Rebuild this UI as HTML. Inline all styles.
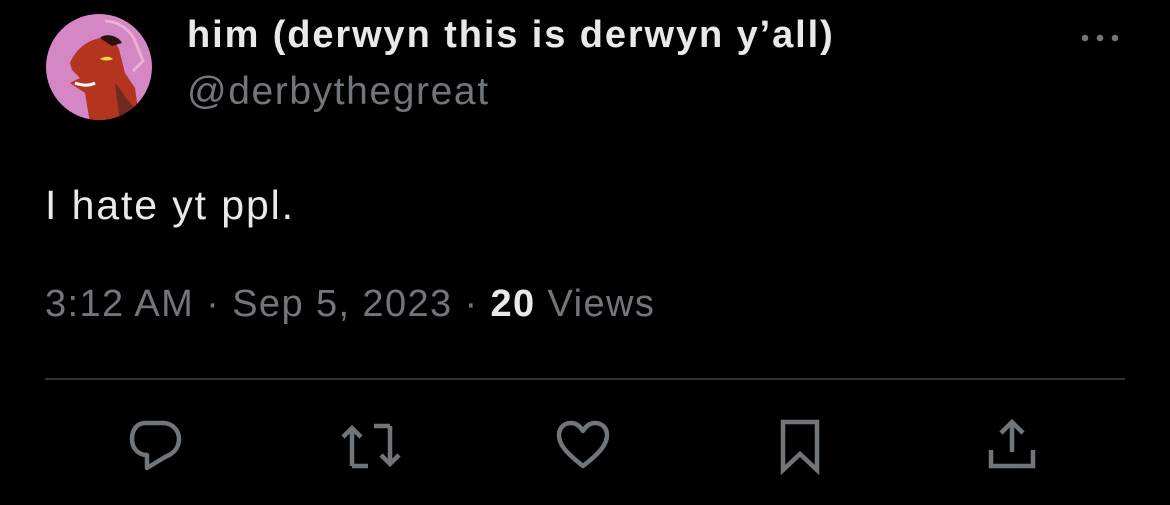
<!DOCTYPE html>
<html><head><style>
body{margin:0;width:1170px;height:505px;background:#000;overflow:hidden;font-family:"Liberation Sans",Helvetica,Arial,sans-serif;position:relative}
.t{position:absolute;white-space:nowrap}
svg{position:absolute}
</style></head><body>
<svg style="left:45px;top:13px" width="108" height="108" viewBox="0 0 108 108">
<defs><clipPath id="c"><circle cx="54" cy="54" r="53"/></clipPath></defs>
<g clip-path="url(#c)">
<rect width="108" height="108" fill="#d586c4"/>
<path d="M60 8c12 0 25 8 30 20l8 20-10 10" fill="none" stroke="#e9b1cf" stroke-width="3"/>
<path d="M25 50c5-12 15-22 30-25 10-2 18 5 20 15l5 20 10 15 5 35H45l-5-30-15-10 10-5-8-8z" fill="#b3341f"/>
<path d="M55 25c5-5 18-3 22 5l-10 3z" fill="#2a1210"/>
<path d="M55 46c4-3 10-3 13 0-4 2-9 2-13 0z" fill="#e6d84a"/>
<path d="M30 70c8 3 14 3 20 0" stroke="#fff" stroke-width="3" fill="none"/>
<path d="M70 70c5 5 10 15 20 25l5 15H75z" fill="#6e2a1c"/>
</g></svg>
<div class="t" style="left:187px;top:14px;font-size:38px;font-weight:bold;color:#e7e9ea;letter-spacing:1.9px">him (derwyn this is derwyn y’all)</div>
<div class="t" style="left:187px;top:70px;font-size:39px;color:#71767b;letter-spacing:1.6px">@derbythegreat</div>
<svg style="left:1080px;top:31px" width="42" height="14"><circle cx="5" cy="7" r="3.3" fill="#71767b"/><circle cx="20" cy="7" r="3.3" fill="#71767b"/><circle cx="35" cy="7" r="3.3" fill="#71767b"/></svg>
<div class="t" style="left:45px;top:182px;font-size:41px;color:#e7e9ea;letter-spacing:1.9px">I hate yt ppl.</div>
<div class="t" style="left:45px;top:283px;font-size:38px;color:#71767b;letter-spacing:1.4px">3:12 AM · Sep 5, 2023 · <b style="color:#e7e9ea">20</b> Views</div>
<div style="position:absolute;left:45px;top:378px;width:1080px;height:2px;background:#2f3336"></div>
<svg style="left:125px;top:418px" width="60" height="56" viewBox="0 0 60 56" fill="none" stroke="#71767b" stroke-width="4.5" stroke-linejoin="round">
<path d="M20 5h18c10 0 16 8 16 16 0 9-6 15-14 18L22 50V37c-9 0-15-7-15-16S12 5 20 5z"/></svg>
<svg style="left:338px;top:418px" width="66" height="56" viewBox="0 0 66 56" fill="none" stroke="#71767b" stroke-width="4.5">
<path d="M14 48V10M5 19l9-9 9 9M14 48h16M52 8v38M43 37l9 9 9-9M52 8H36"/></svg>
<svg style="left:553px;top:418px" width="60" height="56" viewBox="0 0 60 56" fill="none" stroke="#71767b" stroke-width="4.5" stroke-linejoin="round">
<path d="M30 48C12 34 6 26 6 17 6 10 11 5 18 5c5 0 9 3 12 8 3-5 7-8 12-8 7 0 12 5 12 12 0 9-6 17-24 31z"/></svg>
<svg style="left:775px;top:416px" width="50" height="60" viewBox="0 0 50 60" fill="none" stroke="#71767b" stroke-width="4.5" stroke-linejoin="miter">
<path d="M8 6h34v48L25 38 8 54z"/></svg>
<svg style="left:985px;top:416px" width="54" height="58" viewBox="0 0 54 58" fill="none" stroke="#71767b" stroke-width="4.5">
<path d="M27 36V6M16 17L27 6l11 11M6 34v16h42V34"/></svg>
</body></html>
